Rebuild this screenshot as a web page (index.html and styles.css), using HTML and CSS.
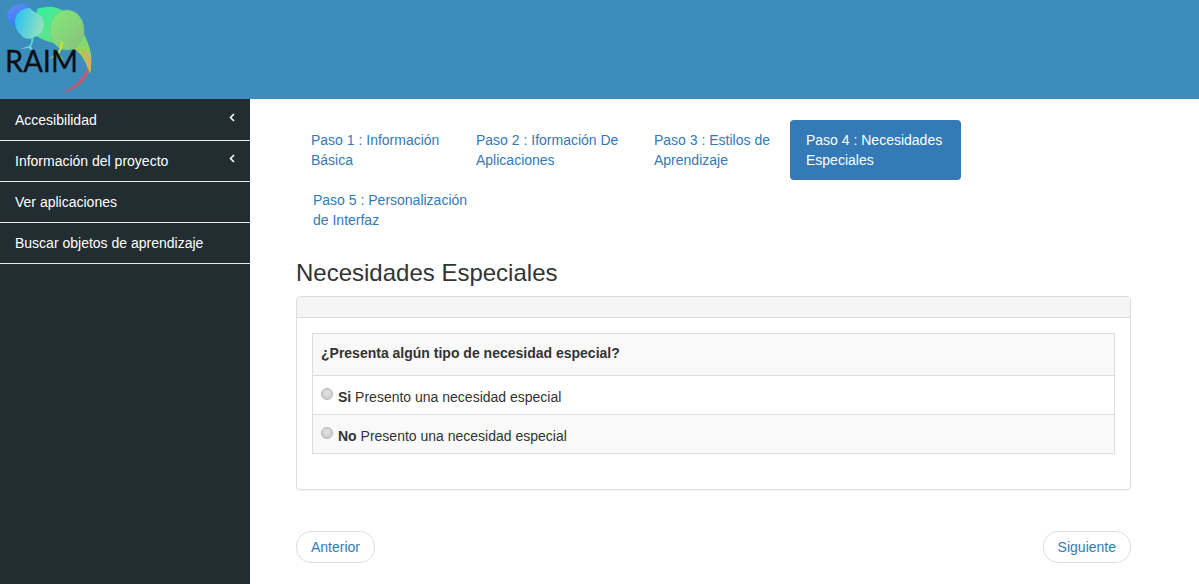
FILE: index.html
```html
<!DOCTYPE html>
<html lang="es">
<head>
<meta charset="utf-8">
<title>RAIM</title>
<link rel="stylesheet" href="styles.css">
</head>
<body>
<header class="topbar">
  <svg class="logo" width="100" height="99" viewBox="0 0 100 99" aria-hidden="true">
    <defs>
      <linearGradient id="body" x1="0" y1="0" x2="1" y2="1">
        <stop offset="0" stop-color="#30f0a0"/><stop offset="0.5" stop-color="#70e080"/><stop offset="1" stop-color="#a8d050"/>
      </linearGradient>
      <linearGradient id="head" x1="0" y1="0" x2="1" y2="0.3">
        <stop offset="0" stop-color="#20c0f8"/><stop offset="1" stop-color="#90e0c0"/>
      </linearGradient>
      <linearGradient id="eye" x1="0" y1="0" x2="1" y2="1">
        <stop offset="0" stop-color="#80ea78"/><stop offset="1" stop-color="#8cc07c"/>
      </linearGradient>
      <linearGradient id="blue" x1="0" y1="0" x2="0.6" y2="1">
        <stop offset="0" stop-color="#6a8cf0"/><stop offset="1" stop-color="#2878f8"/>
      </linearGradient>
    </defs>
    <path d="M37 9C45 6 56 5 65 12C76 20 85 33 89 46C92 56 92 64 90 72C87 64 83 53 72 48C60 44 46 43 35 35Z" fill="url(#body)"/>
    <path d="M72 47C78 48 82 49 84 50C88 54 91 62 91 70C90 72 90 72 89 73C87 63 81 52 72 47Z" fill="#a8cc50"/>
    <path d="M83 50C87 51 90 57 91 62C91 66 90 70 88 72C88 64 86 56 83 50Z" fill="#e0a868"/>
    <path d="M89 70C87 80 76 91 61 93C72 88 83 80 87 68Z" fill="#c45a70"/>
    <ellipse cx="67" cy="30" rx="17" ry="20" fill="url(#eye)" stroke="#60cc90" stroke-width="0.6"/>
    <path d="M7 16C7 8 16 4 23 4C28 4 31 8 32 10L22 27C14 27 7 22 7 16Z" fill="url(#blue)"/>
    <path d="M15 22C15 13 22 8 30 8C32 11 36 12 39 14C45 18 45 28 41 33C35 38 26 42 21 35C17 31 15 27 15 22Z" fill="url(#head)"/>
    <path d="M31 37C32 41 31 44 29 46L20 49L29 48L35 55L31 46C33 43 34 40 33 37Z" fill="#62d8d8"/>
    <path d="M61 42C60 47 59 51 57 54L48 59L57 56L64 61L59 54C61 51 63 47 63 42Z" fill="#c8e030"/>
    <text class="logo-text" x="5" y="72" textLength="73" lengthAdjust="spacingAndGlyphs">RAIM</text>
  </svg>
</header>
<div class="layout">
  <nav class="sidebar">
    <a class="side-item" href="#"><span>Accesibilidad</span><svg class="chev" width="6" height="9" viewBox="0 0 6 9"><path d="M5 1L1.5 4.5L5 8" fill="none" stroke="#fff" stroke-width="1.6"/></svg></a>
    <a class="side-item" href="#"><span>Información del proyecto</span><svg class="chev" width="6" height="9" viewBox="0 0 6 9"><path d="M5 1L1.5 4.5L5 8" fill="none" stroke="#fff" stroke-width="1.6"/></svg></a>
    <a class="side-item" href="#"><span>Ver aplicaciones</span></a>
    <a class="side-item" href="#"><span>Buscar objetos de aprendizaje</span></a>
  </nav>
  <main class="content">
    <ul class="steps">
      <li class="step step-1"><a href="#">Paso 1 : Información Básica</a></li>
      <li class="step step-2"><a href="#">Paso 2 : Iformación De Aplicaciones</a></li>
      <li class="step step-3"><a href="#">Paso 3 : Estilos de Aprendizaje</a></li>
      <li class="step step-4 active"><a href="#">Paso 4 : Necesidades Especiales</a></li>
      <li class="step step-5"><a href="#">Paso 5 : Personalización de Interfaz</a></li>
    </ul>
    <h3 class="title">Necesidades Especiales</h3>
    <section class="panel">
      <div class="panel-heading"></div>
      <div class="panel-body">
        <div class="question-table">
          <div class="row row-head"><strong>¿Presenta algún tipo de necesidad especial?</strong></div>
          <label class="row row-option"><span class="radio"></span><span><strong>Si</strong> Presento una necesidad especial</span></label>
          <label class="row row-option striped"><span class="radio"></span><span><strong>No</strong> Presento una necesidad especial</span></label>
        </div>
      </div>
    </section>
    <div class="pager">
      <a class="pager-btn" href="#">Anterior</a>
      <a class="pager-btn" href="#">Siguiente</a>
    </div>
  </main>
</div>
</body>
</html>
```
FILE: styles.css
```css
* { box-sizing: border-box; }
html, body { margin: 0; height: 100%; overflow: hidden; }
body {
  font-family: "Liberation Sans", Arial, sans-serif;
  font-size: 14px;
  line-height: 20px;
  color: #333;
  background: #fff;
}
a { text-decoration: none; }
.topbar { height: 99px; background: #3c8dbc; }
.logo { display: block; }
.logo-text {
  font-family: Lato, "Liberation Sans", sans-serif;
  font-size: 30px;
  fill: #0d0f14;
  stroke: #0d0f14;
  stroke-width: 0.3px;
}
.layout { display: flex; height: 485px; }
.sidebar { width: 250px; flex: none; padding-top: 1px; background: #222d32; }
.side-item {
  display: flex;
  justify-content: space-between;
  align-items: flex-start;
  height: 41px;
  padding: 10px 15px 0;
  border-bottom: 1px solid #e8e8e8;
  color: #fff;
}
.chev { margin: 3px 0 0; }
.content { flex: 1; min-width: 0; padding: 21px 68px 0 46px; }
.steps {
  display: flex;
  flex-wrap: wrap;
  list-style: none;
  margin: 0 0 0 -1px;
  padding: 0;
}
.step + .step { margin-left: 2px; }
.step a {
  display: block;
  padding: 10px 15px 10px 16px;
  border-radius: 4px;
  color: #337ab7;
}
.step-1 { width: 163px; }
.step-2 { width: 176px; }
.step-3 { width: 150px; }
.step-4 { width: 171px; }
.step-5 { width: 186px; }
.step.active a { background: #337ab7; color: #fff; }
.title {
  margin: 20px 0 10px;
  font-size: 24px;
  line-height: 26px;
  font-weight: 500;
}
.panel {
  height: 194px;
  border: 1px solid #ddd;
  border-radius: 4px;
  box-shadow: 0 1px 1px rgba(0, 0, 0, .05);
}
.panel-heading {
  height: 21px;
  background: #f5f5f5;
  border-bottom: 1px solid #ddd;
  border-radius: 3px 3px 0 0;
}
.panel-body { padding: 15px; }
.question-table { border: 1px solid #ddd; }
.row { display: block; padding: 8px; }
.row-head { height: 41px; background: #f9f9f9; padding-top: 9px; }
.row-option {
  display: flex;
  align-items: flex-start;
  gap: 5px;
  height: 39px;
  border-top: 1px solid #ddd;
  padding-top: 11px;
}
.row-option.striped { background: #f9f9f9; }
.radio {
  width: 12px;
  height: 12px;
  margin-top: 1px;
  border-radius: 50%;
  border: 1px solid #b5b5b5;
  background: radial-gradient(circle at 50% 40%, #e4e4e4, #c4c4c4);
}
.pager {
  display: flex;
  justify-content: space-between;
  margin-top: 41px;
}
.pager-btn {
  display: block;
  padding: 5px 14px;
  height: 32px;
  background: #fff;
  border: 1px solid #ddd;
  border-radius: 15px;
  color: #337ab7;
}
```
